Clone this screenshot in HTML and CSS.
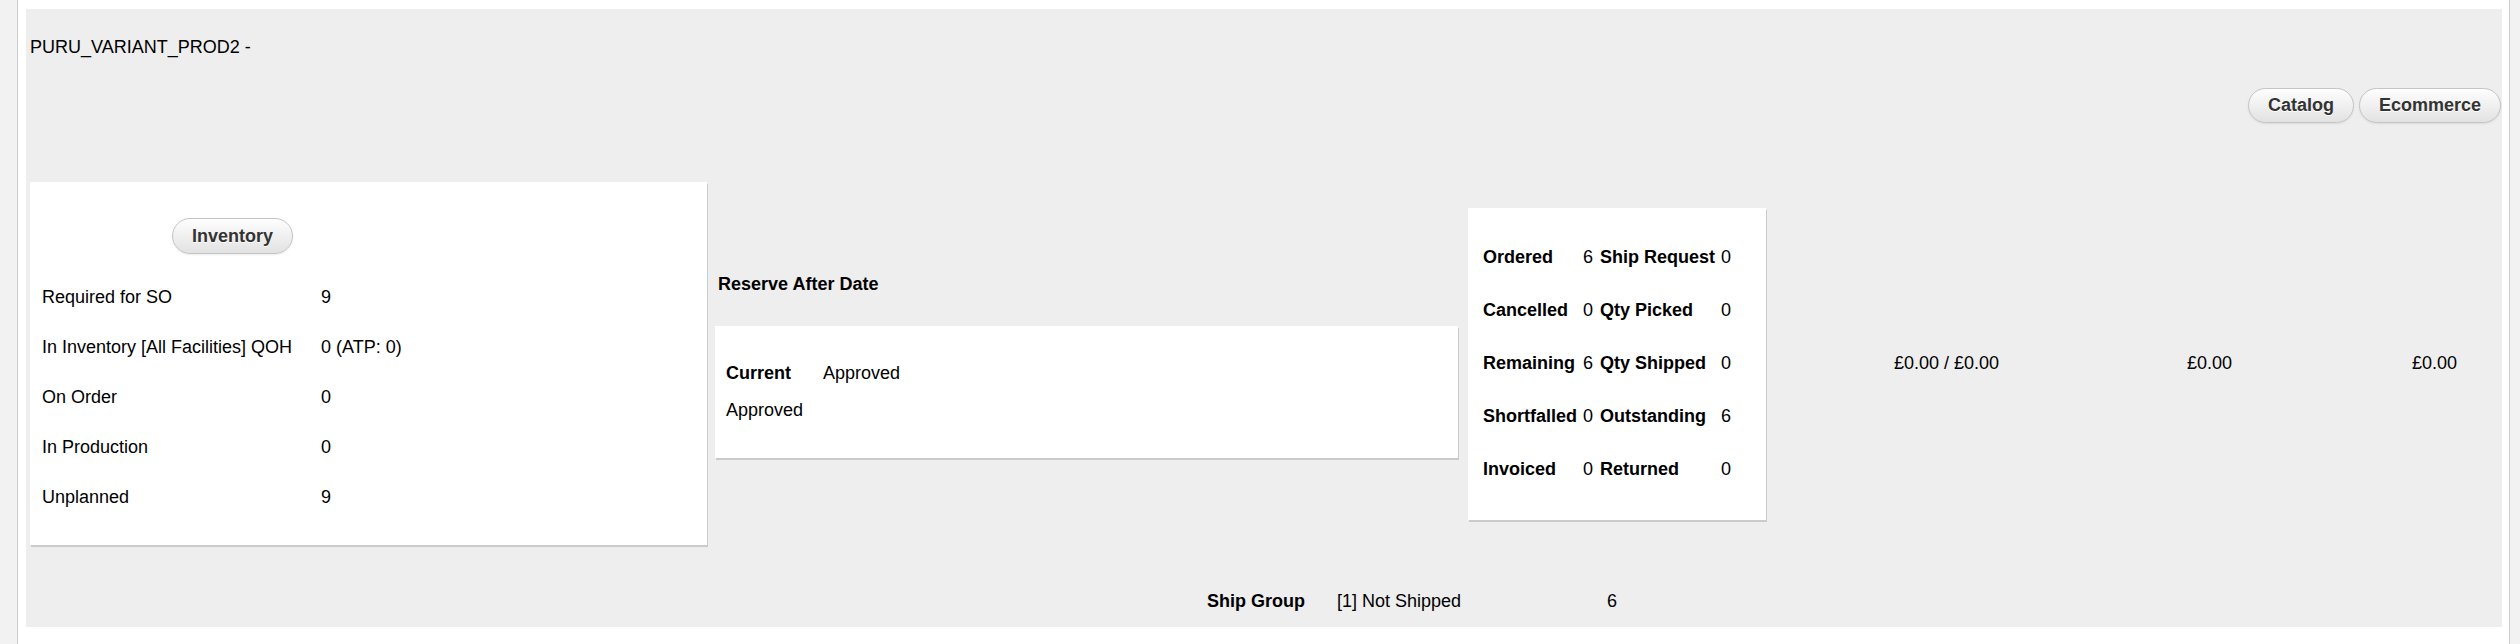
FILE: index.html
```html
<!DOCTYPE html>
<html>
<head>
<meta charset="utf-8">
<link rel="stylesheet" href="styles.css">
</head>
<body>
<div class="page">
  <div class="panel">
    <div class="title">PURU_VARIANT_PROD2 -</div>
    <div class="actions">
      <a class="btn">Catalog</a>
      <a class="btn">Ecommerce</a>
    </div>
    <div class="item-row">
      <div class="cell cell-inv">
        <div class="card inv-card">
          <a class="btn inv-btn">Inventory</a>
          <div class="inv-table">
            <div class="inv-label">Required for SO</div><div class="inv-value">9</div>
            <div class="inv-label">In Inventory [All Facilities] QOH</div><div class="inv-value">0 (ATP: 0)</div>
            <div class="inv-label">On Order</div><div class="inv-value">0</div>
            <div class="inv-label">In Production</div><div class="inv-value">0</div>
            <div class="inv-label">Unplanned</div><div class="inv-value">9</div>
          </div>
        </div>
      </div>
      <div class="cell cell-status">
        <div class="reserve">Reserve After Date</div>
        <div class="card status-card">
          <div class="status-line"><span class="status-label">Current</span><span>Approved</span></div>
          <div class="status-line">Approved</div>
        </div>
      </div>
      <div class="cell cell-qty">
        <div class="card qty-card">
          <div class="qty-table">
            <div class="qlabel">Ordered</div><div class="qval">6</div><div class="qlabel">Ship Request</div><div class="qval">0</div>
            <div class="qlabel">Cancelled</div><div class="qval">0</div><div class="qlabel">Qty Picked</div><div class="qval">0</div>
            <div class="qlabel">Remaining</div><div class="qval">6</div><div class="qlabel">Qty Shipped</div><div class="qval">0</div>
            <div class="qlabel">Shortfalled</div><div class="qval">0</div><div class="qlabel">Outstanding</div><div class="qval">6</div>
            <div class="qlabel">Invoiced</div><div class="qval">0</div><div class="qlabel">Returned</div><div class="qval">0</div>
          </div>
        </div>
      </div>
      <div class="cell price">£0.00 / £0.00</div>
      <div class="cell price">£0.00</div>
      <div class="cell price">£0.00</div>
    </div>
    <div class="ship-row">
      <div class="ship-label">Ship Group</div>
      <div class="ship-value">[1] Not Shipped</div>
      <div class="ship-qty">6</div>
    </div>
  </div>
</div>
</body>
</html>
```
FILE: styles.css
```css
html, body {
  margin: 0;
  padding: 0;
}
body {
  background: #f2f2f2;
  font-family: "Liberation Sans", Arial, sans-serif;
  font-size: 18px;
  color: #000;
  height: 644px;
  overflow: hidden;
}
.page {
  margin-left: 17px;
  width: 2493px;
  height: 644px;
  background: #fff;
  border-left: 1px solid #cfcfcf;
  border-right: 1px solid #cfcfcf;
  padding: 9px 7px 0 8px;
  box-sizing: border-box;
}
.panel {
  background: #eeeeee;
  height: 618px;
  padding: 0 1px 0 4px;
  box-sizing: border-box;
  display: flex;
  flex-direction: column;
}
.title {
  margin-top: 28px;
  line-height: 21px;
  height: 21px;
}
.actions {
  margin-top: 30px;
  display: flex;
  justify-content: flex-end;
  gap: 5px;
}
.btn {
  display: inline-flex;
  align-items: center;
  justify-content: center;
  height: 35px;
  box-sizing: border-box;
  padding: 0 19px;
  border: 1px solid #c4c4c4;
  border-radius: 18px;
  background: linear-gradient(#fefefe, #e2e2e2);
  box-shadow: 0 1px 2px rgba(0,0,0,0.08);
  color: #333;
  font-weight: bold;
  text-shadow: 0 1px 0 #fff;
  font-size: 18px;
}
.item-row {
  margin-top: 59px;
  display: grid;
  grid-template-columns: 681px 751px 308px 239px 233px 225px 1fr;
  align-items: center;
}
.card {
  background: #fff;
  box-shadow: 1px 2px 0 #cbcbcb;
}
.inv-card {
  width: 677px;
  height: 363px;
  box-sizing: border-box;
  padding: 36px 0 0 12px;
}
.inv-btn {
  height: 36px;
  margin-left: 130px;
}
.inv-table {
  margin-top: 18px;
  display: grid;
  grid-template-columns: 279px auto;
  grid-auto-rows: 50px;
  align-items: center;
}
.cell-status {
  padding-left: 4px;
  padding-right: 4px;
  padding-top: 5px;
}
.reserve {
  font-weight: bold;
  line-height: 21px;
  padding-left: 3px;
  margin-bottom: 31px;
}
.status-card {
  height: 132px;
  box-sizing: border-box;
  padding: 37px 0 0 11px;
}
.status-line {
  line-height: 21px;
  margin-bottom: 16px;
}
.status-label {
  font-weight: bold;
  display: inline-block;
  width: 97px;
}
.cell-qty {
  padding-left: 6px;
}
.qty-card {
  width: 298px;
  height: 312px;
  box-sizing: border-box;
  padding: 23px 0 0 15px;
}
.qty-table {
  display: grid;
  grid-template-columns: 100px 17px 121px auto;
  grid-auto-rows: 53px;
  align-items: center;
}
.qlabel {
  font-weight: bold;
}
.price {
  text-align: right;
  padding-right: 10px;
  line-height: 21px;
}
.ship-row {
  margin-top: 46px;
  display: flex;
  line-height: 21px;
  padding-left: 1177px;
}
.ship-label {
  font-weight: bold;
  width: 130px;
}
.ship-value {
  width: 270px;
}
```
